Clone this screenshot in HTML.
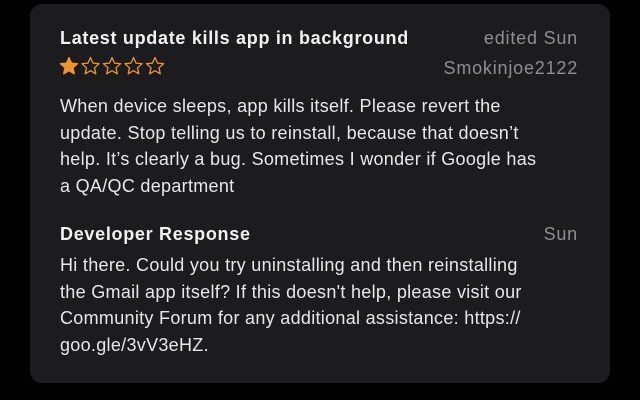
<!DOCTYPE html>
<html><head><meta charset="utf-8"><style>
html,body{margin:0;padding:0;background:#000;width:640px;height:400px;overflow:hidden}
.card{position:absolute;left:30px;top:4px;width:580px;height:379px;background:#1c1c1e;border-radius:12px}
.t{position:absolute;font-family:"Liberation Sans",sans-serif;font-size:18px;color:#e8e8ea;white-space:nowrap}
.b{font-weight:bold;color:#f2f2f4;letter-spacing:0.7px}
.g{color:#8e8e93;letter-spacing:0.8px}
.r{right:32px;text-align:right}
.body{position:absolute;left:30px;font-family:"Liberation Sans",sans-serif;font-size:18px;line-height:26.7px;color:#e8e8ea;white-space:nowrap;letter-spacing:0.3px}
</style></head><body>
<div class="card">
<div class="t b" style="left:30px;top:24px">Latest update kills app in background</div>
<div class="t g r" style="top:24px">edited Sun</div>
<div class="t g r" style="top:54px">Smokinjoe2122</div>
<svg style="position:absolute;left:29px;top:52px" width="106" height="20" viewBox="0 0 106 20">
<g stroke="#f0952c" stroke-width="1.3" stroke-linejoin="round">
<path d="M10 1.5l2.5 5.6 6.1.6-4.6 4.1 1.3 6-5.3-3.1-5.3 3.1 1.3-6-4.6-4.1 6.1-.6z" fill="#f0952c"/>
<path transform="translate(21.5 0)" d="M10 1.5l2.5 5.6 6.1.6-4.6 4.1 1.3 6-5.3-3.1-5.3 3.1 1.3-6-4.6-4.1 6.1-.6z" fill="none"/>
<path transform="translate(43 0)" d="M10 1.5l2.5 5.6 6.1.6-4.6 4.1 1.3 6-5.3-3.1-5.3 3.1 1.3-6-4.6-4.1 6.1-.6z" fill="none"/>
<path transform="translate(64.5 0)" d="M10 1.5l2.5 5.6 6.1.6-4.6 4.1 1.3 6-5.3-3.1-5.3 3.1 1.3-6-4.6-4.1 6.1-.6z" fill="none"/>
<path transform="translate(86 0)" d="M10 1.5l2.5 5.6 6.1.6-4.6 4.1 1.3 6-5.3-3.1-5.3 3.1 1.3-6-4.6-4.1 6.1-.6z" fill="none"/>
</g></svg>
<div class="body" style="top:89px">When device sleeps, app kills itself. Please revert the<br>update. Stop telling us to reinstall, because that doesn’t<br>help. It’s clearly a bug. Sometimes I wonder if Google has<br>a QA/QC department</div>
<div class="t b" style="left:30px;top:220px">Developer Response</div>
<div class="t g r" style="top:220px">Sun</div>
<div class="body" style="top:248px">Hi there. Could you try uninstalling and then reinstalling<br>the Gmail app itself? If this doesn't help, please visit our<br>Community Forum for any additional assistance: https://<br>goo.gle/3vV3eHZ.</div>
</div>
</body></html>
